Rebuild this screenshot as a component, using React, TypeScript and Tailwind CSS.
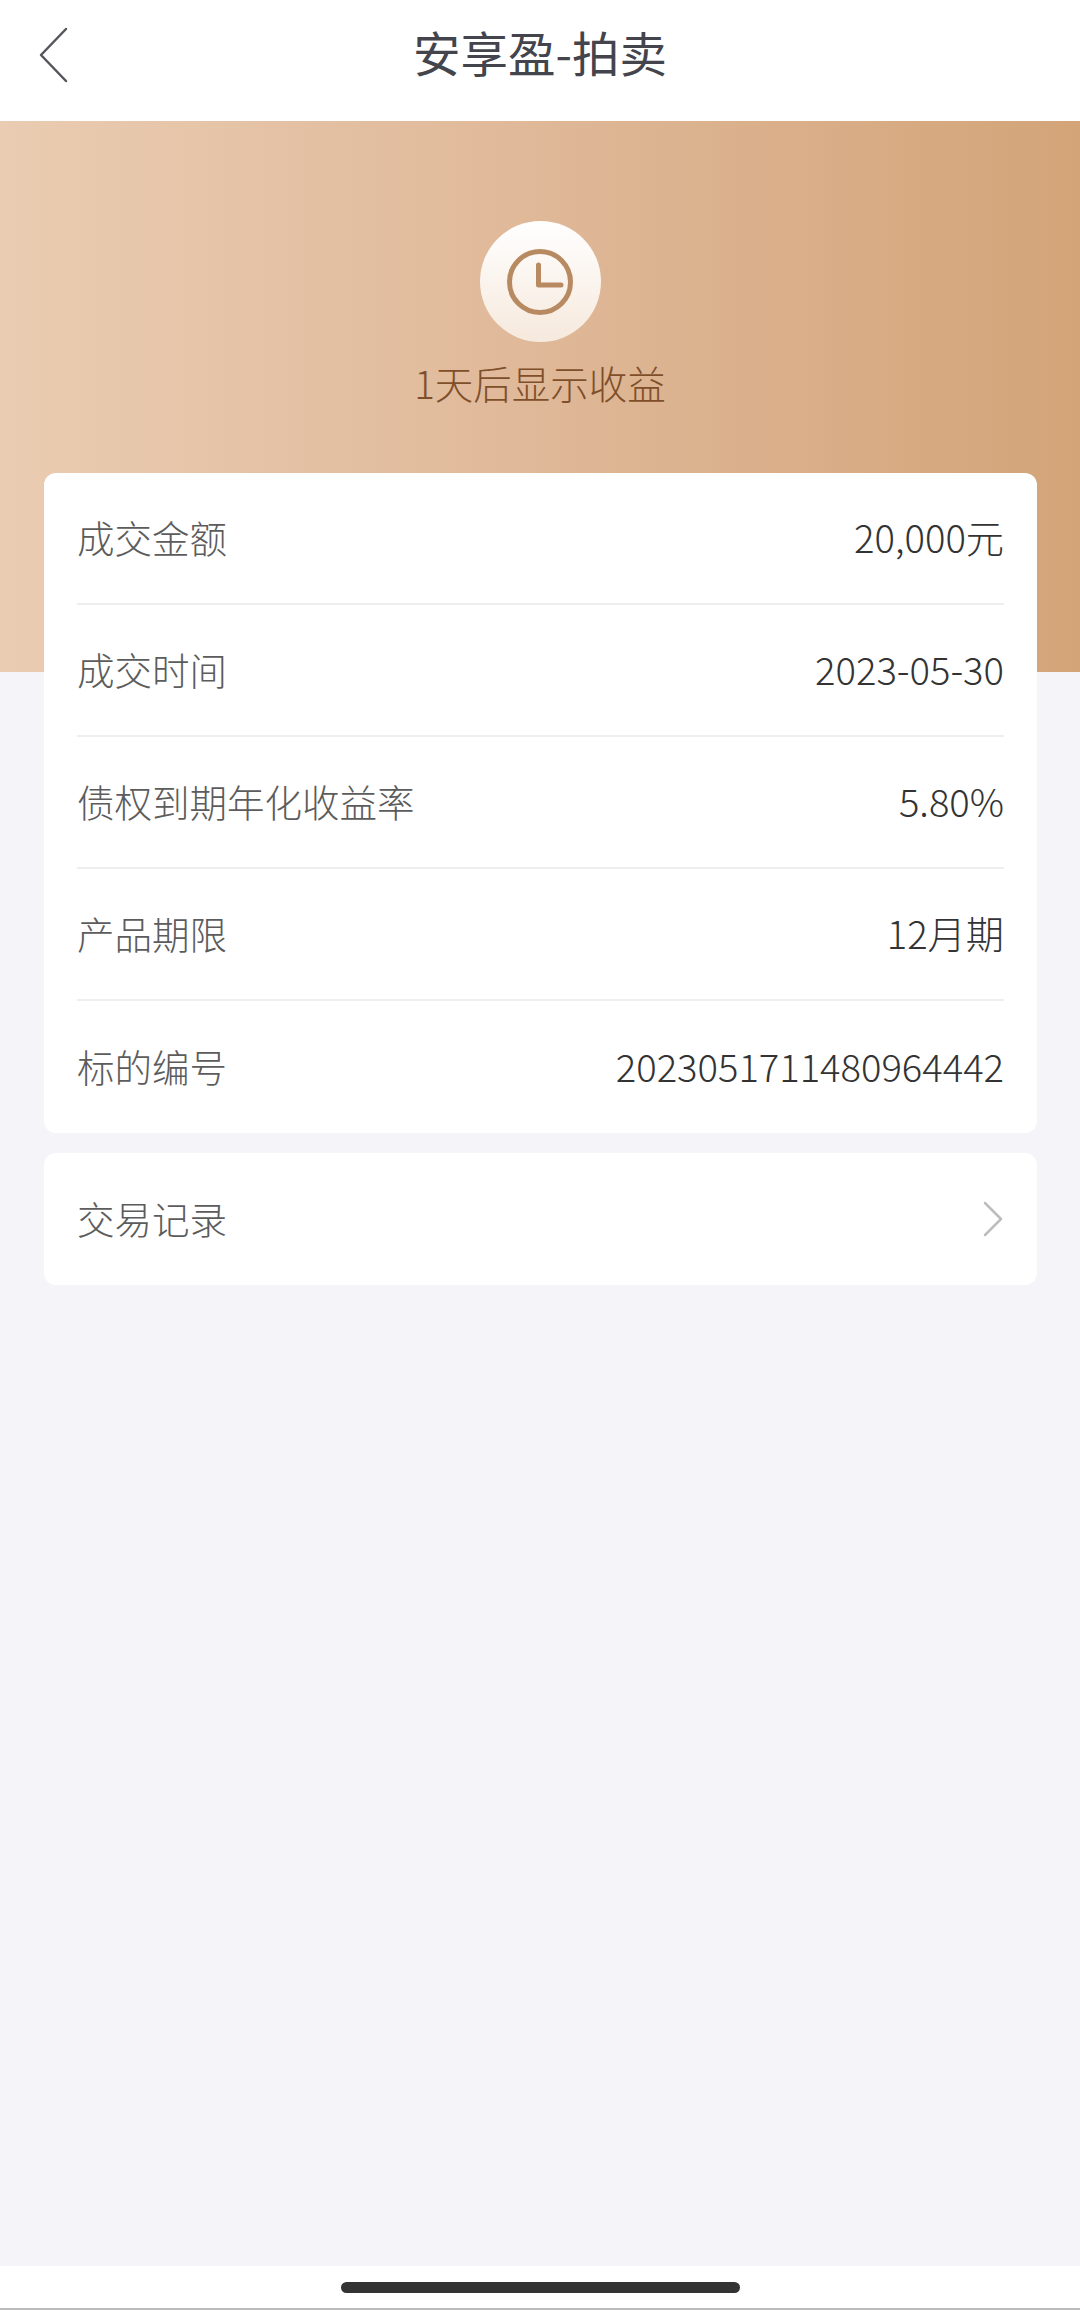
const rows = [
  { label: "成交金额", value: "20,000元" },
  { label: "成交时间", value: "2023-05-30" },
  { label: "债权到期年化收益率", value: "5.80%" },
  { label: "产品期限", value: "12月期" },
  { label: "标的编号", value: "2023051711480964442" },
];

export default function App() {
  return (
    <div className="flex h-[2310px] flex-col overflow-hidden bg-[#f4f4f9] font-['Noto_Sans_CJK_SC',sans-serif]">
      {/* Header */}
      <header className="relative flex h-[121px] shrink-0 items-center justify-center bg-white pb-[18px]">
        <button className="absolute left-[38px] top-[27px]">
          <svg width="32" height="56" viewBox="0 0 32 56" fill="none">
            <path d="M28 2 L3 28 L28 54" stroke="#55555c" strokeWidth="2.5" strokeLinecap="round" strokeLinejoin="round" />
          </svg>
        </button>
        <h1 className="text-[47.5px] leading-none font-normal text-[#44444c]">安享盈-拍卖</h1>
      </header>

      {/* Hero */}
      <section className="flex h-[551px] shrink-0 flex-col items-center bg-gradient-to-r from-[#eaccb2] via-[#dfb898] to-[#d3a478] pt-[100px]">
        <div className="flex h-[121px] w-[121px] items-center justify-center rounded-full bg-gradient-to-b from-white to-[#f6e9dd]">
          <svg width="66" height="66" viewBox="0 0 66 66" fill="none">
            <circle cx="33" cy="33" r="30.5" stroke="#b78a62" strokeWidth="5" />
            <path d="M31.5 16 V36 H54" stroke="#b78a62" strokeWidth="5" strokeLinecap="round" strokeLinejoin="round" />
          </svg>
        </div>
        <p className="mt-[17px] text-[38.5px] leading-[46px] font-light text-[#7f4f2a]">1天后显示收益</p>
      </section>

      {/* Cards */}
      <main className="relative -mt-[199px] flex flex-col gap-[20px] pl-[44px] pr-[43px]">
        <div className="rounded-[12px] bg-white px-[33px]">
          {rows.map((row, i) => (
            <div
              key={row.label}
              className={`flex h-[132px] items-center justify-between pb-[2px] ${i < rows.length - 1 ? "border-b-2 border-[#eeeeee]" : ""}`}
            >
              <span className="text-[37.5px] font-light text-[#5c5c5c]">{row.label}</span>
              <span className="text-[38.2px] font-light text-[#333333]">{row.value}</span>
            </div>
          ))}
        </div>
        <div className="flex h-[132px] items-center justify-between rounded-[12px] bg-white px-[33px] pb-[2px]">
          <span className="text-[37.5px] font-light text-[#5c5c5c]">交易记录</span>
          <svg width="22" height="36" viewBox="0 0 22 36" fill="none" className="mt-[2px]">
            <path d="M3 2 L19 18 L3 34" stroke="#bdbdbd" strokeWidth="2.5" strokeLinecap="round" strokeLinejoin="round" />
          </svg>
        </div>
      </main>

      {/* Home indicator */}
      <div className="mt-auto flex h-[44px] shrink-0 items-start justify-center border-b-2 border-[#bbbbbb] bg-white pt-[16px]">
        <div className="h-[11px] w-[399px] rounded-full bg-[#333333]" />
      </div>
    </div>
  );
}
